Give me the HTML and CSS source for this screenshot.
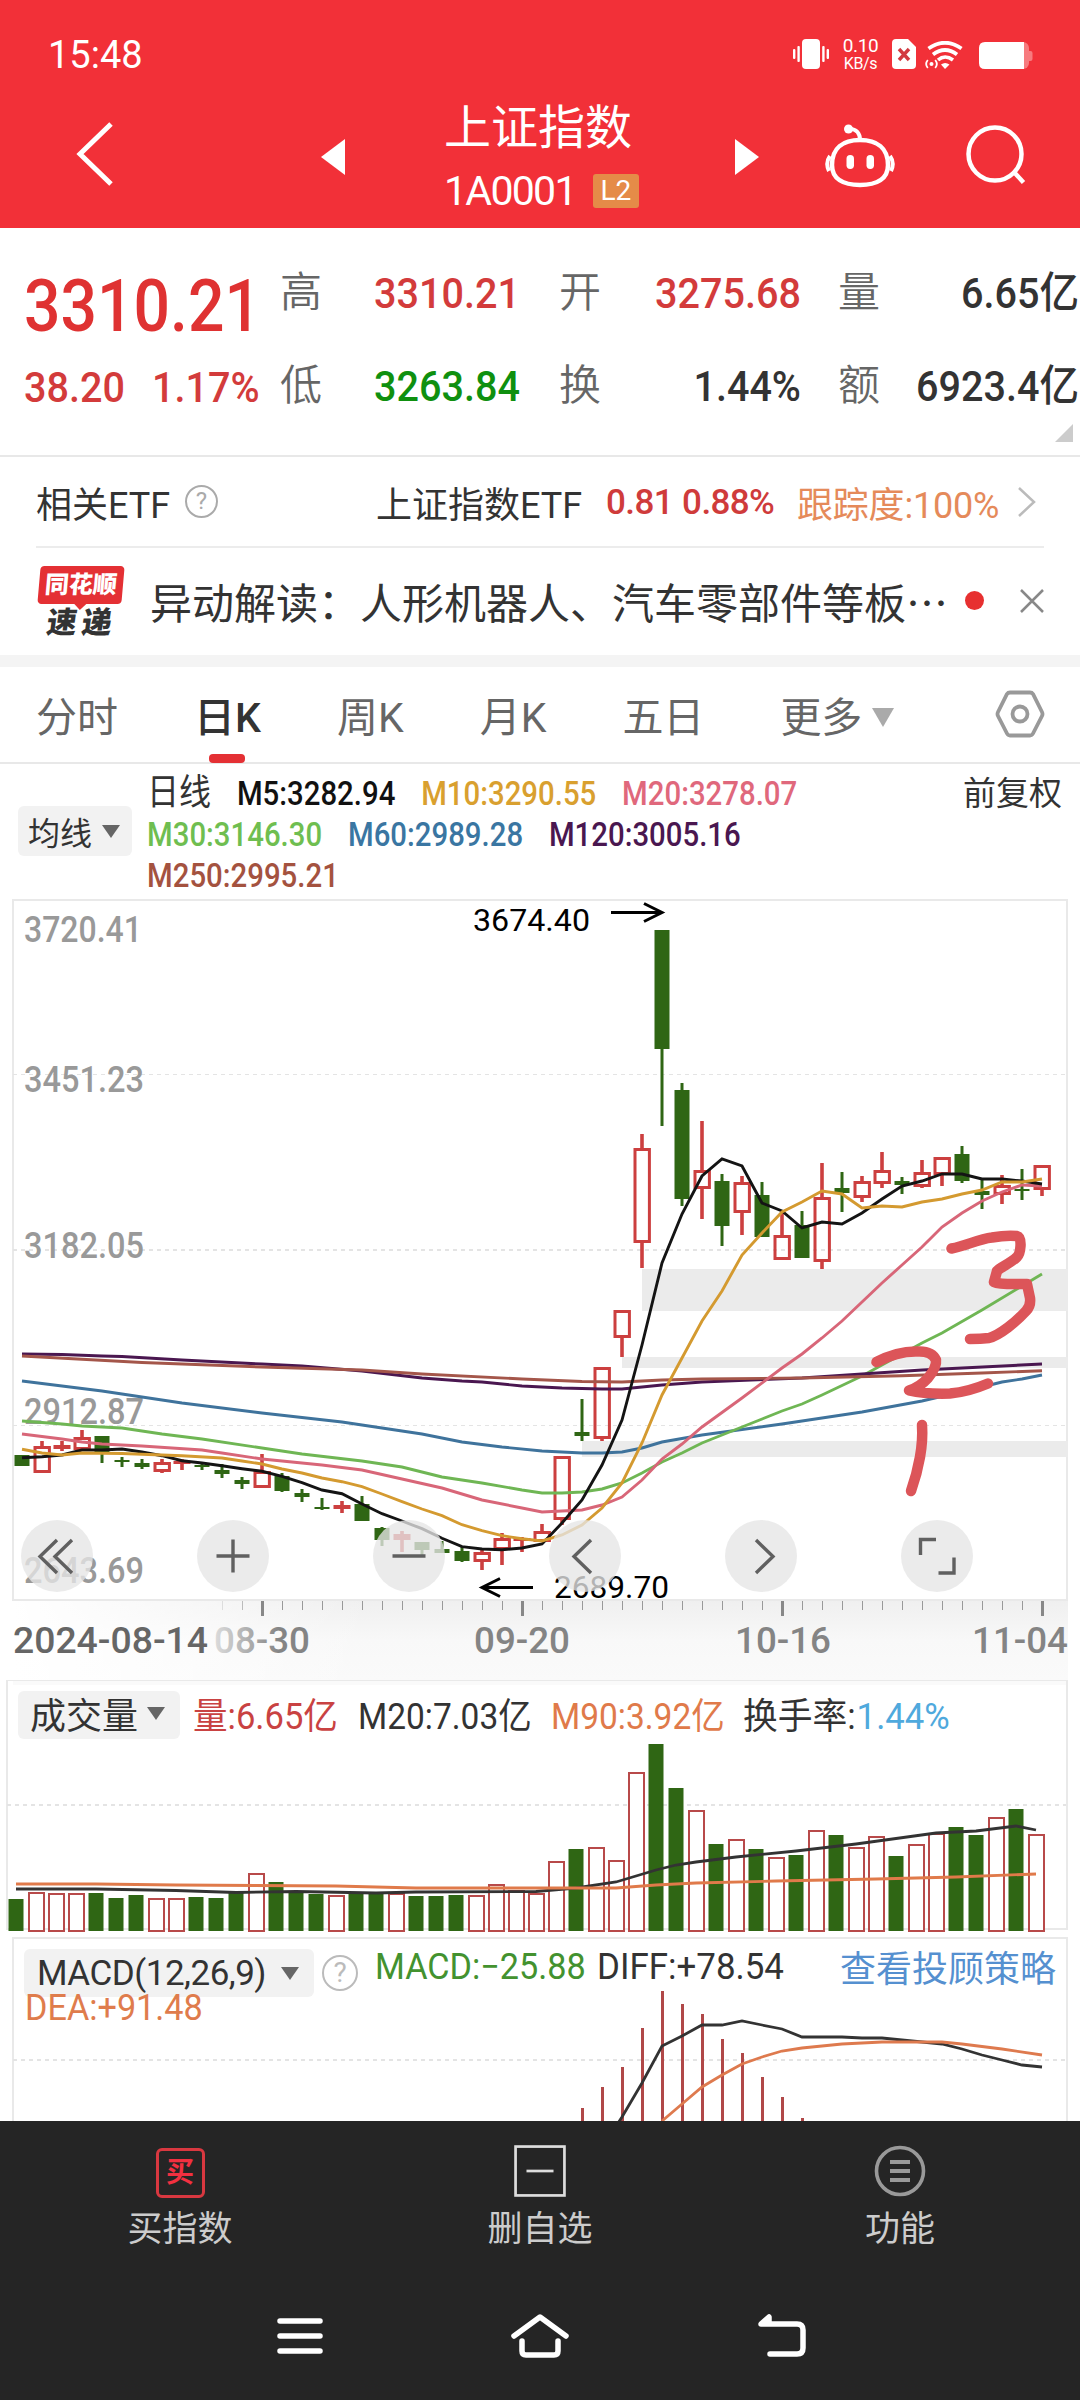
FILE: index.html
```html
<!DOCTYPE html>
<html lang="zh-CN">
<head>
    <meta charset="UTF-8">
    <meta name="viewport" content="width=device-width, initial-scale=1.0">
    <title>上证指数</title>
    <link rel="stylesheet" href="styles.css">
</head>
<body>
    <div class="header">
        <!-- Status bar -->
        <div class="status-bar">
            <span class="time">15:48</span>
            <div class="status-icons">
                <svg width="36" height="30" viewBox="0 0 36 30" fill="#fff">
                    <rect x="9" y="0" width="18" height="30" rx="4"/>
                    <rect x="0" y="10" width="2.4" height="10" rx="1"/>
                    <rect x="4.4" y="7" width="2.4" height="16" rx="1"/>
                    <rect x="29.2" y="7" width="2.4" height="16" rx="1"/>
                    <rect x="33.6" y="10" width="2.4" height="10" rx="1"/>
                </svg>
                <div class="speed"><span>0.10</span><span class="unit">KB/s</span></div>
                <svg class="sim" width="24" height="30" viewBox="0 0 24 30">
                    <path d="M4 0H16L24 8V26Q24 30 20 30H4Q0 30 0 26V4Q0 0 4 0Z" fill="#fff"/>
                    <path d="M7 10L17 21M17 10L7 21" stroke="#d23a40" stroke-width="3.4"/>
                </svg>
                <svg class="wifi" width="38" height="28" viewBox="0 0 38 28" fill="none" stroke="#fff" stroke-width="3.8">
                    <path d="M3.500 7.500Q20 -4 36.500 7.500"/>
                    <path d="M8 13.500Q20 4.500 32 13.500"/>
                    <path d="M13 19Q20 13 28 19" stroke-width="3.600"/>
                    <path d="M16 23.500Q20 20.500 24.500 23.500L20 28Z" fill="#fff" stroke="none"/>
                    <circle cx="6.500" cy="23" r="2" fill="#fff" stroke="none"/>
                    <path d="M2.800 19Q-0.500 23 2.800 27M10.200 19Q13.500 23 10.200 27" stroke-width="1.800"/>
                </svg>
                <svg class="battery" width="54" height="27" viewBox="0 0 54 27">
                    <rect x="30" y="0" width="20" height="27" rx="6" fill="#f77a7e"/>
                    <rect x="48" y="9" width="5.500" height="10" rx="2" fill="#f77a7e"/>
                    <path d="M6 0H45V27H6Q0 27 0 21V6Q0 0 6 0Z" fill="#fff"/>
                </svg>
            </div>
        </div>

        <!-- Title bar -->
        <div class="nav-bar">
            <svg class="back" width="40" height="66" viewBox="0 0 40 66" fill="none" stroke="#fff" stroke-width="5"><path d="M36 3L5 33L36 63"/></svg>
            <svg class="prev" width="24" height="36" viewBox="0 0 24 36"><path d="M24 0V36L0 18Z" fill="#fff"/></svg>
            <div class="title">
                <div class="name">上证指数</div>
                <div class="code"><span>1A0001</span><span class="badge">L2</span></div>
            </div>
            <svg class="next" width="24" height="36" viewBox="0 0 24 36"><path d="M0 0V36L24 18Z" fill="#fff"/></svg>
            <svg class="robot" width="70" height="64" viewBox="0 0 70 64" fill="none" stroke="#fff" stroke-width="4.500">
                <path d="M35 16C52 16 63 24 63 41C63 55 52 61 35 61C18 61 7 55 7 41C7 24 18 16 35 16Z"/>
                <path d="M35 16C35 9 31 5 25 5" stroke-width="4"/>
                <circle cx="23.500" cy="5" r="4.500" fill="#fff" stroke="none"/>
                <path d="M5 32Q0 39 4 47M65 32Q70 39 66 47" stroke-width="4"/>
                <rect x="21.500" y="31" width="7.500" height="14" rx="3.700" fill="#fff" stroke="none"/>
                <rect x="41.500" y="31" width="7.500" height="14" rx="3.700" fill="#fff" stroke="none"/>
            </svg>
            <svg class="search" width="62" height="62" viewBox="0 0 62 62" fill="none" stroke="#fff" stroke-width="4.500"><circle cx="30" cy="30" r="26.500"/><path d="M48 47L58.500 58.500"/></svg>
        </div>
    </div>

    <!-- Quote -->
    <div class="quote">
        <div class="quote-main">
            <div class="price">3310.21</div>
            <div class="change"><span>38.20</span><span>1.17%</span></div>
        </div>
        <div class="quote-grid">
            <span class="label">高</span><span class="value red">3310.21</span>
            <span class="label">开</span><span class="value red">3275.68</span>
            <span class="label">量</span><span class="value">6.65亿</span>
            <span class="label">低</span><span class="value green">3263.84</span>
            <span class="label">换</span><span class="value">1.44%</span>
            <span class="label">额</span><span class="value">6923.4亿</span>
        </div>
        <svg class="corner" width="18" height="18" viewBox="0 0 18 18"><path d="M18 0V18H0Z" fill="#ccc"/></svg>
    </div>

    <!-- Related ETF -->
    <div class="etf">
        <span class="etf-label">相关ETF</span>
        <span class="help">?</span>
        <span class="etf-name">上证指数ETF</span>
        <span class="etf-num">0.81 0.88%</span>
        <span class="etf-track">跟踪度:100%</span>
        <svg width="20" height="32" viewBox="0 0 20 32" fill="none" stroke="#bbb" stroke-width="2.500"><path d="M2 2L17 16L2 30"/></svg>
    </div>

    <!-- News -->
    <div class="news">
        <div class="logo">
            <div class="logo-top"><span>同花顺</span></div>
            <div class="logo-bottom">速递</div>
        </div>
        <span class="news-text">异动解读：人形机器人、汽车零部件等板⋯</span>
        <span class="dot"></span>
        <svg width="26" height="26" viewBox="0 0 26 26" stroke="#888" stroke-width="2.500"><path d="M2 2L24 24M24 2L2 24"/></svg>
    </div>

    <!-- Period tabs -->
    <div class="tabs">
        <span>分时</span>
        <span class="active">日K</span>
        <span>周K</span>
        <span>月K</span>
        <span>五日</span>
        <span class="more">更多<b class="arrow"></b></span>
        <svg width="50" height="48" viewBox="0 0 50 48" fill="none" stroke="#999" stroke-width="3.800"><path d="M15 2.500H35Q37 2.500 38 4L47 22Q48 24 47 26L38 43.500Q37 45.500 35 45.500H15Q13 45.500 12 43.500L3 26Q2 24 3 22L12 4Q13 2.500 15 2.500Z"/><circle cx="25" cy="24" r="7.500"/></svg>
    </div>

    <!-- Moving averages -->
    <div class="legend">
        <div class="pill">均线<b class="arrow"></b></div>
        <div class="ma">
            <div><span class="day">日线</span><span class="m5">M5:3282.94</span><span class="m10">M10:3290.55</span><span class="m20">M20:3278.07</span></div>
            <div><span class="m30">M30:3146.30</span><span class="m60">M60:2989.28</span><span class="m120">M120:3005.16</span></div>
            <div><span class="m250">M250:2995.21</span></div>
        </div>
        <span class="adjust">前复权</span>
    </div>

    <!-- K line -->
    <div class="kline">
        <svg id="kline" width="1080" height="782" viewBox="0 898 1080 782"></svg>
        <div class="tools">
            <button><svg viewBox="0 0 72 72"><path d="M36 20L19 36.500L36 53M51 20L34 36.500L51 53"/></svg></button>
            <button><svg viewBox="0 0 72 72"><path d="M36 19.500V52.500M19.500 36H52.500"/></svg></button>
            <button><svg viewBox="0 0 72 72"><path d="M19.500 36H52.500"/></svg></button>
            <button><svg viewBox="0 0 72 72"><path d="M42 20L25 36.500L42 53"/></svg></button>
            <button><svg viewBox="0 0 72 72"><path d="M31 20L48 36.500L31 53"/></svg></button>
            <button><svg viewBox="0 0 72 72"><path d="M19.500 35V19.500H35M53 37.500V53H37.500"/></svg></button>
        </div>
    </div>

    <!-- Volume -->
    <div class="volume">
        <svg id="volume" class="plot" width="1080" height="256" viewBox="0 1680 1080 256"></svg>
        <div class="panel-head">
            <div class="pill">成交量<b class="arrow"></b></div>
            <span class="vol-now">量:6.65亿</span>
            <span class="vol-m20">M20:7.03亿</span>
            <span class="vol-m90">M90:3.92亿</span>
            <span class="vol-rate">换手率:<em>1.44%</em></span>
        </div>
    </div>

    <!-- MACD -->
    <div class="macd">
        <svg id="macd" class="plot" width="1080" height="185" viewBox="0 1936 1080 185"></svg>
        <div class="panel-head">
            <div class="pill">MACD(12,26,9)<b class="arrow"></b></div>
            <span class="help">?</span>
            <span class="macd-val">MACD:−25.88</span>
            <span class="diff">DIFF:+78.54</span>
            <a class="link">查看投顾策略</a>
        </div>
        <div class="dea">DEA:+91.48</div>
    </div>

    <!-- Bottom bar -->
    <div class="bottom-bar">
        <div class="bottom-item">
            <div class="icon buy">买</div>
            <span>买指数</span>
        </div>
        <div class="bottom-item">
            <svg class="icon" width="50" height="50" viewBox="0 0 50 50" fill="none" stroke="#ddd" stroke-width="2.600"><rect x="1.500" y="1.500" width="47" height="47"/><path d="M12 25H38"/></svg>
            <span>删自选</span>
        </div>
        <div class="bottom-item">
            <svg class="icon" width="52" height="52" viewBox="0 0 52 52" fill="none" stroke="#999" stroke-width="3.600"><circle cx="26" cy="26" r="23.500"/><path d="M16 17H36M16 26H36M16 35H36" stroke-width="4"/></svg>
            <span>功能</span>
        </div>
    </div>
    <div class="system-bar">
        <svg width="48" height="40" viewBox="0 0 48 40" stroke="#fff" stroke-width="5.500" stroke-linecap="round"><path d="M4 5H44M4 20H44M4 35H44"/></svg>
        <svg width="60" height="46" viewBox="0 0 60 46" fill="none" stroke="#fff" stroke-width="5.500" stroke-linecap="round" stroke-linejoin="round"><path d="M4 23L30 4L56 23M12 28V38Q12 42 16 42H44Q48 42 48 38V28"/></svg>
        <svg width="52" height="46" viewBox="0 0 52 46" fill="none" stroke="#fff" stroke-width="5.500" stroke-linecap="round" stroke-linejoin="round"><path d="M14 41H41Q47 41 47 35V17Q47 11 41 11H5L13 4V11"/></svg>
    </div>

    <script src="charts.js"></script>
</body>
</html>
```

FILE: styles.css
```css
* {
    box-sizing: border-box;
}
body {
    margin: 0;
    width: 1080px;
    height: 2400px;
    overflow: hidden;
    background-color: #fff;
    color: #333;
    font-family: Roboto, "Noto Sans CJK SC", sans-serif;
}
svg {
    display: block;
    flex: none;
}
span, a {
    white-space: nowrap;
}
.red {
    color: #d33b3b;
}
.green {
    color: #0f900f;
}

/* header */
.header {
    height: 228px;
    background-color: #f23038;
    color: #fff;
}
.status-bar {
    display: flex;
    justify-content: space-between;
    height: 88px;
    padding: 32px 47px 0 48px;
}
.time {
    font-size: 38px;
    line-height: 46px;
}
.status-icons {
    display: flex;
    align-items: flex-start;
    padding-top: 7px;
}
.speed {
    width: 37px;
    margin: -3px 0 0 13px;
    text-align: center;
    letter-spacing: -0.4px;
}
.speed span {
    display: block;
    font-size: 19px;
    line-height: 20px;
}
.speed .unit {
    font-size: 16px;
    line-height: 16px;
}
.sim {
    margin-left: 13px;
}
.wifi {
    margin: 2px 0 0 9px;
}
.battery {
    margin: 3px 0 0 16px;
}
.nav-bar {
    display: flex;
    align-items: center;
    height: 136px;
    padding: 0 37px 0 75px;
}
.nav-bar .back {
    margin-bottom: 5px;
}
.nav-bar .prev {
    margin: 2px 99px 0 206px;
}
.nav-bar .title {
    width: 195px;
    text-align: left;
}
.name {
    font-size: 47px;
    line-height: 60px;
    font-weight: 400;
    white-space: nowrap;
}
.code {
    display: flex;
    align-items: center;
    height: 56px;
    padding-top: 9px;
    font-size: 41px;
    letter-spacing: -1.7px;
}
.badge {
    width: 51px;
    margin-left: 17px;
    background-color: #e58b48;
    border-radius: 3px;
    font-size: 28px;
    line-height: 34px;
    text-align: center;
    letter-spacing: 0;
}
.nav-bar .next {
    margin: 2px 0 0 96px;
}
.nav-bar .robot {
    margin: 0 0 1px 66px;
}
.nav-bar .search {
    margin: 0 16px 3px auto;
}

/* quote */
.quote {
    position: relative;
    display: flex;
    height: 229px;
    border-bottom: 2px solid #e8e8e8;
}
.quote-main {
    width: 280px;
    padding: 33px 0 0 24px;
    color: #df3232;
}
.price {
    font-size: 73px;
    font-weight: 500;
    line-height: 90px;
    transform: scaleX(0.88);
    transform-origin: left;
}
.change {
    display: flex;
    justify-content: space-between;
    width: 256px;
    margin-top: 11px;
    font-size: 43px;
    font-weight: 500;
    line-height: 50px;
    color: #d33b3b;
    transform: scaleX(0.92);
    transform-origin: left;
}
.quote-grid {
    display: grid;
    grid-template-columns: 41px 199px 39px 41px 201px 37px 41px 200px;
    grid-template-rows: 50px 50px;
    row-gap: 43px;
    padding-top: 40px;
    line-height: 50px;
    font-size: 42px;
}
.quote-grid .label {
    color: #666;
    font-weight: 350;
}
.quote-grid .value {
    text-align: right;
    font-size: 43px;
    font-weight: 500;
    transform: scaleX(0.92);
    transform-origin: right;
}
.quote-grid .label:nth-child(1), .quote-grid .label:nth-child(7) {
    grid-column: 1;
}
.quote-grid .label:nth-child(3), .quote-grid .label:nth-child(9) {
    grid-column: 4;
}
.quote-grid .label:nth-child(5), .quote-grid .label:nth-child(11) {
    grid-column: 7;
}
.corner {
    position: absolute;
    right: 7px;
    bottom: 13px;
}

/* etf */
.etf {
    display: flex;
    align-items: center;
    height: 91px;
    margin: 0 36px;
    border-bottom: 2px solid #ececec;
    font-size: 36px;
}
.help {
    width: 33px;
    height: 33px;
    border: 2px solid #aaa;
    border-radius: 50%;
    color: #aaa;
    font-size: 24px;
    line-height: 29px;
    text-align: center;
}
.etf-label {
    width: 149px;
}
.etf-name {
    margin-left: 158px;
    width: 230px;
}
.etf-num {
    width: 191px;
    padding-top: 2px;
    color: #cf3b3b;
    font-weight: 500;
    font-size: 35px;
    letter-spacing: -0.6px;
    word-spacing: 1px;
}
.etf-track {
    width: 220px;
    color: #e58a5a;
    letter-spacing: -0.2px;
}

/* news */
.news {
    display: flex;
    align-items: center;
    height: 119px;
    padding: 0 35px 2px 37px;
    border-bottom: 12px solid #f4f4f4;
}
.logo {
    width: 113px;
    padding-top: 3px;
}
.logo-top {
    position: relative;
    width: 84px;
    height: 38px;
    margin-left: 2px;
    background-color: #e43034;
    border-radius: 4px;
    transform: skewX(-5deg);
    color: #fff;
    font-size: 24px;
    font-weight: 900;
    line-height: 38px;
    text-align: center;
}
.logo-top::after {
    content: "";
    position: absolute;
    left: 36px;
    top: 37px;
    border: 7px solid transparent;
    border-top-color: #e43034;
    border-bottom: 0;
}
.logo-bottom {
    margin: 3px 0 0 10px;
    font-size: 30px;
    font-weight: 900;
    line-height: 32px;
    letter-spacing: 5px;
    color: #333;
    transform: skewX(-8deg);
}
.news-text {
    width: 816px;
    font-size: 42px;
}
.dot {
    width: 19px;
    height: 19px;
    margin-right: 35px;
    background-color: #e73030;
    border-radius: 50%;
}

/* tabs */
.tabs {
    display: flex;
    align-items: center;
    height: 97px;
    padding: 0 35px 2px 36px;
    border-bottom: 2px solid #e8e8e8;
    color: #666;
    font-size: 41px;
}
.tabs span {
    margin-right: 76px;
}
.tabs .active {
    position: relative;
    color: #333;
    font-weight: 500;
}
.tabs .active::after {
    content: "";
    position: absolute;
    left: 15px;
    bottom: -19px;
    width: 36px;
    height: 9px;
    border-radius: 4px;
    background-color: #e43034;
}
.tabs svg {
    margin-left: auto;
}
.arrow {
    display: inline-block;
    border: 9px solid transparent;
    border-top: 13px solid #666;
    border-bottom: 0;
}
.tabs .more {
    margin-right: 0;
}
.tabs .arrow {
    margin-left: 10px;
    border-width: 19px 11px 0;
    border-top-color: #aaa;
    vertical-align: 5px;
}

/* legend */
.legend {
    display: flex;
    height: 134px;
    padding: 9px 18px 0;
    font-size: 32px;
}
.pill {
    display: flex;
    align-items: center;
    justify-content: space-between;
    background-color: #f2f2f2;
    border-radius: 6px;
    white-space: nowrap;
}
.legend .pill {
    width: 114px;
    height: 50px;
    margin-top: 33px;
    padding: 0 12px 0 10px;
}
.ma {
    width: 814px;
    padding-left: 15px;
    line-height: 41px;
}
.ma div {
    display: flex;
    font-size: 33px;
    font-weight: 500;
    transform: scaleX(0.89);
    transform-origin: left;
}
.ma span {
    margin-right: 29px;
}
.ma .day {
    font-weight: 400;
    font-size: 36px;
}
.m5 { color: #111; }
.m10 { color: #d9a02f; }
.m20 { color: #e0687c; }
.m30 { color: #6fbe50; }
.m60 { color: #3a76a2; }
.m120 { color: #4a1750; }
.m250 { color: #a4523f; }
.adjust {
    margin-left: auto;
    line-height: 41px;
    font-size: 33px;
}

/* charts */
.kline {
    position: relative;
    height: 782px;
}
.tools {
    position: absolute;
    left: 21px;
    top: 622px;
    display: flex;
    gap: 104px;
}
.tools button {
    width: 72px;
    height: 72px;
    padding: 0;
    border: none;
    border-radius: 50%;
    background-color: rgba(230, 230, 230, 0.78);
}
.tools path {
    fill: none;
    stroke: #606060;
    stroke-width: 3.4px;
}
.volume, .macd {
    position: relative;
    font-size: 36px;
}
.volume {
    height: 256px;
    padding: 11px 0 0 18px;
}
.macd {
    height: 185px;
    padding: 7px 0 0 24px;
    overflow: hidden;
}
.plot {
    position: absolute;
    left: 0;
    top: 0;
}
.panel-head {
    position: relative;
    display: flex;
    align-items: center;
    height: 48px;
}
.volume .pill {
    width: 162px;
    height: 48px;
    padding: 0 15px 4px 12px;
}
.vol-now, .vol-m20, .vol-m90, .vol-rate {
    width: 193px;
    padding-bottom: 4px;
    transform: scaleX(0.93);
    transform-origin: left;
}
.vol-now {
    width: 165px;
    margin-left: 13px;
    color: #c94242;
    transform: scaleX(0.96);
}
.vol-m90 {
    color: #e07a4a;
}
.vol-m90, .vol-rate {
    width: 192px;
}
.vol-rate {
    transform: scaleX(0.965);
}
.vol-rate em {
    margin-left: 1px;
    font-style: normal;
    color: #4fa9dd;
}
.macd .pill {
    width: 290px;
    height: 48px;
    margin-top: 12px;
    padding: 0 15px 0 13px;
    font-size: 35px;
    letter-spacing: -0.5px;
}
.macd .help {
    width: 36px;
    height: 36px;
    margin: 12px 0 0 8px;
    line-height: 32px;
    color: #bbb;
    border-color: #bbb;
    font-size: 28px;
}
.macd-val, .diff, .dea {
    transform: scaleX(0.95);
    transform-origin: left;
}
.macd-val {
    width: 222px;
    margin-left: 17px;
    color: #43922f;
}
.diff {
    width: 243px;
    transform: scaleX(0.97);
}
.link {
    padding-bottom: 3px;
    color: #5590d0;
}
.dea {
    position: relative;
    margin: -4px 0 0 1px;
    line-height: 42px;
    color: #df7c4c;
}

/* svg text */
.axis {
    font-size: 36px;
    font-weight: 500;
    fill: #999;
}
.mark {
    font-size: 31px;
    fill: #000;
}
.date {
    font-size: 36px;
    font-weight: 500;
    fill: #848484;
}
.date.first {
    fill: #666;
}

/* bottom */
.bottom-bar {
    display: flex;
    height: 159px;
    background-color: #252525;
    color: #ccc;
}
.bottom-item {
    display: flex;
    flex: 1;
    flex-direction: column;
    align-items: center;
    font-size: 35px;
    line-height: 46px;
}
.icon {
    width: 52px;
    height: 52px;
    margin: 24px 0 10px;
}
.buy {
    width: 49px;
    height: 50px;
    margin: 27px 0 9px;
    border: 3px solid #d93840;
    border-radius: 6px;
    color: #f23040;
    font-size: 28px;
    font-weight: 700;
    line-height: 43px;
    text-align: center;
}
.system-bar {
    display: flex;
    justify-content: center;
    align-items: center;
    gap: 186px;
    height: 120px;
    padding: 0 0 8px 4px;
    background-color: #252525;
}
```

FILE: charts.js
```javascript
const RED = '#cc3f3f';
const GREEN = '#2f6614';
const STEP = 20;

// [up, high, bodyTop, bodyBottom, low]
const candles = [
    [0, 1455, 1455, 1466, 1466], [1, 1441, 1446, 1472, 1473], [1, 1441, 1445, 1449, 1451], [1, 1430, 1437, 1449, 1449],
    [0, 1436, 1436, 1454, 1463], [0, 1457, 1460, 1462, 1467], [0, 1459, 1463, 1467, 1469], [1, 1459, 1462, 1471, 1473],
    [1, 1459, 1461, 1464, 1470], [0, 1464, 1465, 1467, 1470], [0, 1464, 1470, 1474, 1478], [0, 1477, 1480, 1484, 1489],
    [1, 1454, 1471, 1487, 1487], [0, 1473, 1476, 1491, 1492], [0, 1489, 1493, 1497, 1502], [0, 1498, 1507, 1509, 1510],
    [1, 1501, 1505, 1509, 1513], [0, 1496, 1504, 1521, 1521], [0, 1527, 1528, 1540, 1546], [1, 1531, 1534, 1540, 1552],
    [0, 1542, 1542, 1550, 1556], [0, 1541, 1549, 1553, 1553], [0, 1547, 1551, 1561, 1562], [1, 1549, 1552, 1561, 1570],
    [1, 1533, 1538, 1549, 1565], [1, 1537, 1538, 1541, 1552], [1, 1524, 1531, 1541, 1541], [1, 1456, 1456, 1519, 1525],
    [0, 1399, 1432, 1436, 1441], [1, 1367, 1367, 1438, 1441], [1, 1310, 1310, 1337, 1357], [1, 1134, 1148, 1242, 1268],
    [0, 930, 930, 1049, 1126], [0, 1083, 1090, 1199, 1206], [1, 1121, 1170, 1188, 1219], [0, 1174, 1181, 1226, 1246],
    [1, 1176, 1182, 1212, 1235], [0, 1182, 1195, 1237, 1237], [1, 1212, 1235, 1259, 1259], [0, 1211, 1225, 1258, 1258],
    [1, 1163, 1197, 1261, 1269], [0, 1172, 1188, 1193, 1212], [1, 1176, 1181, 1197, 1202], [1, 1152, 1170, 1183, 1188],
    [0, 1177, 1181, 1185, 1194], [1, 1160, 1172, 1186, 1188], [1, 1157, 1157, 1174, 1186], [0, 1146, 1154, 1181, 1183],
    [0, 1180, 1191, 1195, 1209], [1, 1175, 1185, 1194, 1204], [0, 1169, 1189, 1191, 1200], [1, 1165, 1165, 1189, 1196]
];

// [index, y]
const averages = {
    '#3f739c': [[0,1381],[4,1391],[8,1403],[12,1413],[16,1422],[20,1434],[22,1442],[24,1447],[26,1451],[28,1453],[29,1453],[30,1452],[31,1448],[32,1442],[34,1435],[38,1424],[42,1412],[45,1401],[48,1387],[49,1382],[50,1379],[51,1375]],
    '#6fb654': [[0,1421],[2,1424],[3,1426],[5,1428],[7,1434],[9,1439],[12,1448],[14,1454],[17,1461],[18,1464],[19,1467],[21,1477],[23,1483],[25,1490],[26,1493],[27,1493],[28,1492],[29,1489],[30,1483],[31,1473],[32,1462],[33,1453],[34,1443],[36,1427],[38,1411],[39,1404],[40,1395],[42,1376],[45,1343],[46,1333],[48,1310],[51,1274]],
    '#4a1750': [[0,1354],[2,1354.5],[4,1356],[5,1356.5],[8,1360],[12,1364],[14,1366],[17,1371],[20,1378],[22,1381],[23,1382],[25,1386],[27,1388],[29,1389],[30,1389],[32,1385],[34,1382],[39,1378],[42,1374],[45,1370],[51,1364]],
    '#a4564a': [[0,1356],[6,1362.5],[12,1367],[17,1370],[20,1374],[25,1379],[28,1381.5],[30,1382],[32,1380],[34,1379],[39,1378],[44,1375.7],[48,1373],[51,1370.7]],
    '#d86678': [[0,1434],[2,1439],[3,1442],[4,1444],[6,1446],[9,1450],[10,1453],[12,1459],[15,1465],[17,1470],[19,1479],[21,1488],[23,1500],[25,1508],[26,1512],[28,1510],[29,1505],[30,1497],[31,1480],[32,1459],[33,1444],[34,1427],[36,1398],[38,1368],[39,1354],[40,1338],[41,1321],[42,1302],[43,1283],[44,1265],[45,1247],[46,1227],[47,1213],[48,1201],[49,1192],[50,1185],[51,1186]],
    '#141414': [[0,1457.7],[1,1456.7],[2,1455],[3,1450],[4,1450],[5,1449],[6,1452],[7,1455.7],[8,1460.7],[9,1463],[10,1465.7],[11,1468.7],[12,1471.3],[13,1476.3],[14,1482.7],[15,1490],[16,1493.7],[17,1504],[18,1513.7],[19,1521],[20,1528.7],[21,1538.3],[22,1546.7],[23,1549],[24,1549.7],[25,1548],[26,1544],[27,1523],[28,1500],[29,1465],[30,1420],[31,1345],[32,1263],[33,1214],[34,1176],[35,1159],[36,1166],[37,1203],[38,1211],[39,1228],[40,1222],[41,1224],[42,1213],[43,1199],[44,1186],[45,1181],[46,1174],[47,1174],[48,1179],[49,1179],[50,1181],[51,1184]],
    '#d49a30': [[0,1449.3],[1,1453],[2,1455],[3,1453],[5,1453.5],[8,1455.7],[10,1458],[11,1461],[12,1464],[13,1469],[14,1473],[15,1478],[16,1481.7],[17,1486.7],[18,1494],[19,1501.7],[20,1509],[21,1515.7],[22,1524.7],[23,1530.7],[24,1535.7],[25,1538.7],[26,1541],[27,1535],[28,1525],[29,1508],[30,1483],[31,1443],[32,1395],[33,1358],[34,1321],[35,1291],[36,1255],[37,1233],[38,1212],[39,1202],[40,1191],[41,1194],[42,1208],[43,1206],[44,1207],[45,1202],[46,1199],[47,1194],[48,1190],[49,1182],[50,1182],[51,1179]]
};

const volumes = [
    1899, 1892, 1893, 1893, 1893, 1898, 1895, 1898, 1898, 1897, 1898, 1893, 1873, 1882, 1893, 1894, 1895, 1893,
    1893, 1893, 1896, 1896, 1895, 1895, 1884, 1890, 1893, 1861, 1849, 1847, 1860, 1772, 1744, 1788, 1810, 1844,
    1839, 1849, 1857, 1855, 1830, 1835, 1847, 1836, 1856, 1844, 1833, 1827, 1835, 1817, 1809, 1834
];
const volM20 = [[0,1889],[4,1889],[8,1890.5],[11,1892.5],[14,1891.5],[18,1893],[20,1892],[26,1891.5],[28,1888],[30,1882],[31,1876],[32,1870],[33,1865],[34,1862],[36,1857],[39,1851],[42,1844],[46,1833],[48,1831],[50,1826],[51,1830]];
const volM90 = [[0,1884],[4,1884],[8,1885],[16,1886],[20,1888],[30,1888],[32,1885],[34,1883],[38,1881],[43,1879],[47,1877],[51,1874]];

const macdBars = [2108, 2087, 2067, 2028, 1991, 2004, 2014, 2039, 2053, 2077, 2097, 2118];
const diffLine = [[29,2148],[30,2117],[31,2083],[32,2046],[33,2036],[34,2025],[35,2025],[36,2021],[37,2025],[38,2029],[39,2037],[41,2037],[42,2038],[43,2038],[44,2040],[46,2044],[47,2049],[48,2055],[49,2060],[50,2065],[51,2067]];
const deaLine = [[32,2121],[33,2104],[34,2087],[35,2075],[36,2064],[37,2057],[38,2051],[39,2048],[41,2044],[43,2042],[46,2042],[47,2044],[49,2049],[51,2055]];

function rect(x, y, w, h, attrs) {
    return `<rect x="${x}" y="${y}" width="${w}" height="${h}" ${attrs}/>`;
}
function line(points, left, color, width) {
    const list = points.map(p => `${left + p[0] * STEP},${p[1]}`).join(' ');
    return `<polyline points="${list}" fill="none" stroke="${color}" stroke-width="${width}"/>`;
}
function dash(x1, x2, y, width) {
    return `<path d="M${x1} ${y}H${x2}" stroke="#e4e4e4" stroke-width="${width}" stroke-dasharray="4 4"/>`;
}
function text(cls, x, y, w, str, extra) {
    return `<text class="${cls}" x="${x}" y="${y}" textLength="${w}" lengthAdjust="spacingAndGlyphs" ${extra || ''}>${str}</text>`;
}
function frame(x, y, w, h) {
    return rect(x, y, w, h, 'fill="none" stroke="#e9e9e9" stroke-width="2"');
}

function drawKline() {
    let out = `<defs>
        <linearGradient id="bg" x1="0" y1="0" x2="0" y2="1"><stop offset="0" stop-color="#efefef"/><stop offset="0.5" stop-color="#f8f8f8"/><stop offset="1" stop-color="#fafafa"/></linearGradient>
        <linearGradient id="fade" x1="0" y1="0" x2="1" y2="0"><stop offset="0" stop-color="#fff"/><stop offset="1" stop-color="#fff" stop-opacity="0"/></linearGradient>
        <linearGradient id="dateFade" gradientUnits="userSpaceOnUse" x1="205" y1="0" x2="280" y2="0"><stop offset="0" stop-color="#e8e8e8"/><stop offset="1" stop-color="#848484"/></linearGradient>
    </defs>`;
    out += rect(13, 1600, 1055, 80, 'fill="url(#bg)"') + rect(13, 1600, 360, 80, 'fill="url(#fade)"');
    out += frame(13, 900, 1054, 700);
    out += dash(13, 1066, 1074.5, 1) + dash(13, 1066, 1250, 2) + dash(13, 1066, 1425.5, 1);

    // gaps
    out += rect(642, 1269, 426, 42, 'fill="#ebebeb"');
    out += rect(622, 1357, 446, 11, 'fill="#ebebeb"');
    out += rect(582, 1441, 486, 16, 'fill="#ebebeb"');

    out += text('axis', 24, 942, 118, '3720.41') + text('axis', 24, 1092, 120, '3451.23') + text('axis', 24, 1258, 120, '3182.05')
        + text('axis', 24, 1424, 120, '2912.87') + text('axis', 24, 1583, 120, '2643.69');

    candles.forEach((c, i) => {
        const x = 22 + i * STEP;
        const [up, high, top, bottom, low] = c;
        if (up) {
            out += `<path d="M${x} ${high}V${top}M${x} ${bottom}V${low}" stroke="${RED}" stroke-width="3.6"/>`;
            if (bottom - top < 7) {
                out += rect(x - 8.5, top, 17, bottom - top, `fill="${RED}"`);
            } else {
                out += rect(x - 7, top + 1.5, 14.4, bottom - top - 2, `fill="none" stroke="${RED}" stroke-width="3"`);
            }
        } else {
            out += rect(x - 1.5, high, 3, low - high, `fill="${GREEN}"`);
            out += rect(x - 7.5, top, 15, bottom - top, `fill="${GREEN}"`);
        }
    });
    for (const color in averages) {
        out += line(averages[color], 22, color, 2.9);
    }

    // high / low marks
    out += text('mark', 473, 931, 117, '3674.40') + text('mark', 554, 1598, 115, '2689.70');
    out += '<path d="M611 912.500H661M644 903.500L662 912.500L644 921.500M533 1587.500H483M500 1578.500L482 1587.500L500 1596.500" fill="none" stroke="#000" stroke-width="3"/>';

    // pen notes
    out += '<g fill="none" stroke="#dc5559" stroke-width="10.500" stroke-linecap="round" stroke-linejoin="round">'
        + '<path d="M951.500 1248.500C966 1246 978 1239 992 1237.500Q1006 1235 1017 1236Q1021 1237 1020.500 1246Q1020 1254 1017 1257C1010 1264 1000 1267 997 1271L994 1282C1000 1285 1015 1284 1027 1284L1030 1298Q1031 1306 1026 1311C1016 1322 1000 1335 989 1338Q981 1339 970 1339"/>'
        + '<path d="M876.500 1362C890 1355 904 1351 918 1351.500Q932 1351 936 1360Q937 1367 928 1378Q920 1387 909 1390.500C920 1393 935 1394 950 1393.500Q968 1392 988 1383.500"/>'
        + '<path d="M922 1425Q923 1440 920 1457Q917 1474 911 1491"/></g>';

    // date ticks
    for (let i = 10; i < 52; i++) {
        const x = 22 + i * STEP;
        const major = (i - 12) % 13 === 0;
        const color = i === 10 ? '#ddd' : i === 11 ? '#bbb' : major ? '#888' : '#999';
        out += rect(major ? x - 1 : x, 1601, major ? 3 : 1, major ? 15 : 9, `fill="${color}"`);
    }
    out += text('date first', 13, 1653, 195, '2024-08-14') + text('date', 214, 1653, 96, '08-30', 'style="fill:url(#dateFade)"')
        + text('date', 474, 1653, 96, '09-20') + text('date', 735, 1653, 96, '10-16') + text('date', 972, 1653, 96, '11-04');
    document.getElementById('kline').innerHTML = out;
}

function drawVolume() {
    let out = rect(13, 1680, 1055, 5, 'fill="#fafafa"') + frame(7, 1680, 1060, 249) + dash(7, 1066, 1805, 2);
    volumes.forEach((top, i) => {
        const x = 16 + i * STEP;
        if (candles[i][0]) {
            out += rect(x - 7, top + 1, 15, 1930 - top, 'fill="#fff" stroke="#b84a4a" stroke-width="2"');
        } else {
            out += rect(x - 7.5, top, 15, 1931 - top, `fill="${GREEN}"`);
        }
    });
    out += line(volM20, 16, '#333', 2.8) + line(volM90, 16, '#e07a4a', 2.8);
    document.getElementById('volume').innerHTML = out;
}

function drawMacd() {
    let out = frame(13, 1938, 1054, 200) + dash(13, 1066, 2060, 2);
    macdBars.forEach((top, i) => {
        out += rect(22 + (i + 28) * STEP - 1, top, 3, 2125 - top, 'fill="#b04848"');
    });
    out += line(diffLine, 22, '#333', 2.8) + line(deaLine, 22, '#de7a4e', 2.8);
    document.getElementById('macd').innerHTML = out;
}

drawKline();
drawVolume();
drawMacd();
```
